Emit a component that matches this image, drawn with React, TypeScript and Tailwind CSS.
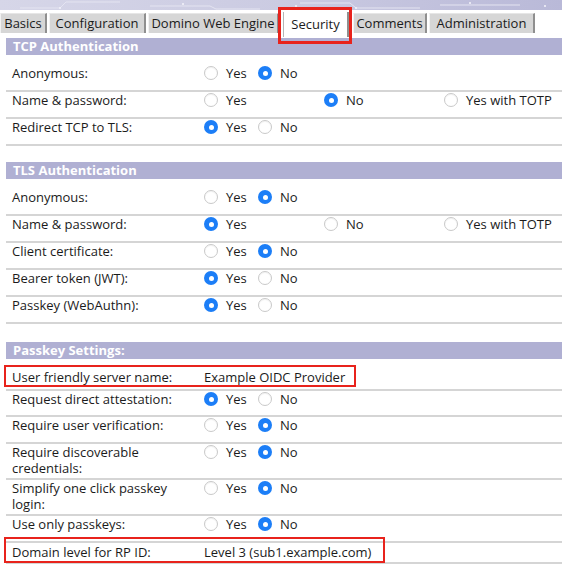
import type { ReactNode } from 'react';

type Opt = { label: string; checked?: boolean };

function Radio({ checked }: { checked?: boolean }) {
  return checked ? (
    <span className="flex h-[14px] w-[14px] shrink-0 items-center justify-center rounded-full bg-[#1c7ef7]">
      <span className="h-[5px] w-[5px] rounded-full bg-white" />
    </span>
  ) : (
    <span className="h-[14px] w-[14px] shrink-0 rounded-full border border-[#c9c9c9] bg-white shadow-[inset_0_1px_1px_rgba(0,0,0,0.06)]" />
  );
}

function Choice({ opts, wide }: { opts: Opt[]; wide?: boolean }) {
  return (
    <div className="flex h-[16px] items-center">
      {opts.map((o) => (
        <div key={o.label} className={`flex items-center ${wide ? 'w-[120px]' : 'first:w-[54px]'}`}>
          <Radio checked={o.checked} />
          <span className="ml-[8px] whitespace-nowrap">{o.label}</span>
        </div>
      ))}
    </div>
  );
}

const yesNo = (yes: boolean) => [
  { label: 'Yes', checked: yes },
  { label: 'No', checked: !yes },
];

function Row({ label, children, className = '', mark }: { label: ReactNode; children: ReactNode; className?: string; mark?: string }) {
  return (
    <div className={`relative flex border-b-2 border-[#d5d5d5] leading-[16px] ${className}`}>
      <div className="w-[198px] shrink-0 pl-[6px] pr-[8px]">{label}</div>
      <div className="flex-1">{children}</div>
      {mark && <div className={`pointer-events-none absolute border-2 border-[#e8231c] ${mark}`} />}
    </div>
  );
}

function Header({ title, className = '' }: { title: string; className?: string }) {
  return (
    <div className={`h-[17px] bg-[#b0b0d3] pl-[7px] text-[13px] font-bold leading-[17px] text-white ${className}`}>
      {title}
    </div>
  );
}

const tabs = [
  { name: 'Basics', w: 'w-[47px]', ml: 'ml-0' },
  { name: 'Configuration', w: 'w-[97px]', ml: 'ml-[2px]' },
  { name: 'Domino Web Engine', w: 'w-[131px]', ml: 'ml-[2px]' },
  { name: 'Security', w: 'w-[66px]', ml: 'ml-[4px]', active: true },
  { name: 'Comments', w: 'w-[74px]', ml: 'ml-[4px]' },
  { name: 'Administration', w: 'w-[106px]', ml: 'ml-[2px]' },
];

export default function App() {
  return (
    <div className="h-[569px] w-[562px] overflow-hidden bg-white font-['Open_Sans',sans-serif] text-[13px] text-[#1b1b1b]">
      {/* banner strip */}
      <div className="relative h-[10px] overflow-hidden bg-gradient-to-r from-[#d6d6e8] via-[#cbcbe2] to-[#b9b9d8]">
        <svg className="absolute inset-0" width="562" height="10">
          <g stroke="#e4e4f1" strokeWidth="1" fill="none">
            <path d="M20 8 H60 L66 2 H120" />
            <path d="M150 6 H210 L216 9 H260" />
            <path d="M300 3 H350 L356 8 H420" />
            <path d="M440 5 H520" />
          </g>
          <g fill="#f3f3fa">
            <circle cx="60" cy="8" r="1" />
            <circle cx="183" cy="4" r="1" />
            <circle cx="296" cy="6" r="1" />
            <circle cx="356" cy="8" r="1" />
            <circle cx="470" cy="3" r="1" />
            <circle cx="545" cy="6" r="1" />
          </g>
        </svg>
      </div>

      {/* tabs */}
      <div className="mt-[2px] flex h-[26px] items-start">
        {tabs.map((t) =>
          t.active ? (
            <div key={t.name} className={`relative ${t.ml} ${t.w} flex h-[25px] items-center justify-center border-l border-r-2 border-l-[#b5b5b5] border-r-[#8f8f8f] bg-white`}>
              {t.name}
              <div className="pointer-events-none absolute -left-[6px] -top-[5px] h-[37px] w-[74px] border-[3px] border-[#e8231c]" />
            </div>
          ) : (
            <div key={t.name} className={`${t.ml} ${t.w} mt-[1px] flex h-[20px] items-center justify-center border-l border-t border-r-2 border-l-[#f2f2f2] border-t-[#e6e6e6] border-r-[#8f8f8f] bg-[#d6d6d6]`}>
              {t.name}
            </div>
          ),
        )}
      </div>

      <div className="ml-[6px]">
        <Header title="TCP Authentication" />
        <Row label="Anonymous:" className="h-[37px] pt-[10px]">
          <Choice opts={yesNo(false)} />
        </Row>
        <Row label="Name & password:" className="h-[27px]">
          <Choice wide opts={[{ label: 'Yes' }, { label: 'No', checked: true }, { label: 'Yes with TOTP' }]} />
        </Row>
        <Row label="Redirect TCP to TLS:" className="h-[27px]">
          <Choice opts={yesNo(true)} />
        </Row>

        <Header title="TLS Authentication" className="mt-[16px]" />
        <Row label="Anonymous:" className="h-[37px] pt-[10px]">
          <Choice opts={yesNo(false)} />
        </Row>
        <Row label="Name & password:" className="h-[27px]">
          <Choice wide opts={[{ label: 'Yes', checked: true }, { label: 'No' }, { label: 'Yes with TOTP' }]} />
        </Row>
        <Row label="Client certificate:" className="h-[27px]">
          <Choice opts={yesNo(false)} />
        </Row>
        <Row label="Bearer token (JWT):" className="h-[27px]">
          <Choice opts={yesNo(true)} />
        </Row>
        <Row label="Passkey (WebAuthn):" className="h-[27px]">
          <Choice opts={yesNo(true)} />
        </Row>

        <Header title="Passkey Settings:" className="mt-[18px]" />
        <Row label="User friendly server name:" className="h-[32px] pt-[10px]" mark="-left-[2px] top-[6px] h-[22px] w-[352px]">
          <span>Example OIDC Provider</span>
        </Row>
        <Row label="Request direct attestation:" className="h-[26px]">
          <Choice opts={yesNo(true)} />
        </Row>
        <Row label="Require user verification:" className="h-[27px]">
          <Choice opts={yesNo(false)} />
        </Row>
        <Row label="Require discoverable credentials:" className="h-[36px]">
          <Choice opts={yesNo(false)} />
        </Row>
        <Row label="Simplify one click passkey login:" className="h-[36px]">
          <Choice opts={yesNo(false)} />
        </Row>
        <Row label="Use only passkeys:" className="h-[27px]">
          <Choice opts={yesNo(false)} />
        </Row>
        <Row label="Domain level for RP ID:" className="h-[21px] pt-[1px]" mark="-left-[2px] -top-[6px] h-[26px] w-[381px]">
          <span>Level 3 (sub1.example.com)</span>
        </Row>
      </div>
    </div>
  );
}
